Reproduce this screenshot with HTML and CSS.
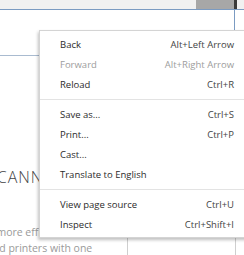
FILE: index.html
```html
<!DOCTYPE html>
<html lang="en">
<head>
    <meta charset="UTF-8">
    <meta name="viewport" content="width=device-width, initial-scale=1.0">
    <title>Scanner</title>
    <link rel="stylesheet" href="styles.css">
</head>
<body>
    <div class="page">
        <div class="topbar">
            <div class="tab-block"></div>
            <div class="tab-edge"></div>
        </div>
        <div class="field"></div>

        <div class="content">
            <div class="text-col">
                <h2 class="title">SCANNER</h2>
                <p class="intro">
                    <span class="line line-one">Be more efficient</span>
                    <span class="line line-two">and printers with one</span>
                </p>
            </div>
            <div class="preview"></div>
        </div>
    </div>

    <div class="menu">
        <div class="item"><span>Back</span><span class="key">Alt+Left Arrow</span></div>
        <div class="item disabled"><span>Forward</span><span class="key">Alt+Right Arrow</span></div>
        <div class="item"><span>Reload</span><span class="key">Ctrl+R</span></div>
        <div class="sep"></div>
        <div class="item"><span>Save as...</span><span class="key">Ctrl+S</span></div>
        <div class="item"><span>Print...</span><span class="key">Ctrl+P</span></div>
        <div class="item"><span>Cast...</span></div>
        <div class="item"><span>Translate to English</span></div>
        <div class="sep"></div>
        <div class="item"><span>View page source</span><span class="key">Ctrl+U</span></div>
        <div class="item"><span>Inspect</span><span class="key">Ctrl+Shift+I</span></div>
    </div>
</body>
</html>
```

FILE: styles.css
```css
body {
    margin: 0;
    width: 244px;
    height: 255px;
    overflow: hidden;
    background-color: #fff;
    font-family: "Open Sans", "Liberation Sans", sans-serif;
    position: relative;
}
.topbar {
    display: flex;
    justify-content: flex-end;
    height: 9px;
    background-color: #f1f1f1;
    border-bottom: 1px solid #7b9bc2;
}
.tab-block {
    width: 38px;
    background-color: #a7a7a7;
}
.tab-edge {
    width: 3px;
    margin-right: 7px;
    background-color: #3a3a3a;
}
.field {
    width: 234px;
    height: 45px;
    border-right: 1px solid #7b9bc2;
    border-bottom: 1px solid #a9bbd0;
}
.content {
    display: flex;
}
.text-col {
    width: 127px;
    overflow: hidden;
}
.title {
    margin: 110px 0 0 -13px;
    font-size: 16px;
    font-weight: 300;
    letter-spacing: 1px;
    color: #444;
    white-space: nowrap;
}
.intro {
    margin: 36px 0 0;
    font-size: 10.5px;
    line-height: 16px;
    color: #9a9a9a;
    white-space: nowrap;
}
.line {
    display: block;
}
.line-one {
    margin-left: -19px;
}
.line-two {
    margin-left: -13px;
}
.preview {
    width: 107px;
    height: 60px;
    margin-top: 150px;
    border-left: 1px solid #cfcfcf;
    border-right: 1px solid #cfcfcf;
}
.menu {
    position: absolute;
    left: 39px;
    top: 30px;
    width: 174px;
    padding: 4px 20px 2px 20px;
    background-color: #fff;
    border: 1px solid #d4d4d4;
    box-shadow: -1px 2px 3px rgba(0, 0, 0, 0.25);
    font-size: 9.5px;
    color: #2b2b2b;
}
.item {
    display: flex;
    justify-content: space-between;
    height: 20px;
    line-height: 20px;
}
.key {
    color: #444;
}
.disabled {
    color: #9d9d9d;
}
.disabled .key {
    color: #9d9d9d;
}
.sep {
    height: 1px;
    margin: 4px -20px 5px;
    background-color: #e3e3e3;
}
```
